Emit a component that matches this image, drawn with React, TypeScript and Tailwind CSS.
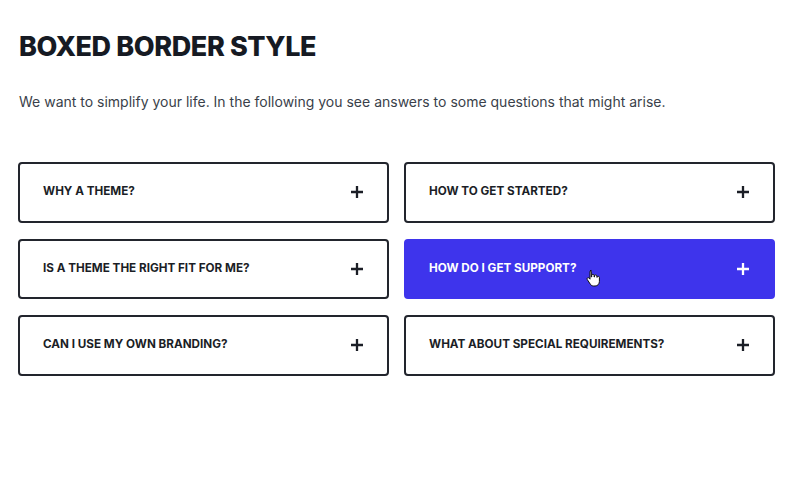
import React, { useState } from 'react';

const questions = [
  'Why a theme?',
  'How to get started?',
  'Is a theme the right fit for me?',
  'How do I get support?',
  'Can I use my own branding?',
  'What about special requirements?',
];

function PlusIcon() {
  return (
    <svg width="14" height="14" viewBox="0 0 14 14" fill="none" stroke="currentColor" strokeWidth="2.3">
      <path d="M7 1v12M1 7h12" />
    </svg>
  );
}

function HandCursor() {
  return (
    <svg className="absolute left-[180px] top-[28px]" width="14" height="18" viewBox="0 0 14 18">
      <path
        d="M4 1.5c.8 0 1.3.5 1.3 1.3V8h.4V6.5c0-.7.5-1.2 1.2-1.2s1.2.5 1.2 1.2V8h.4V7c0-.7.5-1.2 1.2-1.2s1.2.5 1.2 1.2v1.3h.3c0-.6.5-1 1.1-1s1.1.5 1.1 1.1v4c0 2.6-1.8 4.6-4.3 4.6H7.6c-1.4 0-2.4-.6-3.2-1.7L1.3 10.6c-.4-.6-.3-1.3.2-1.7.5-.4 1.2-.3 1.6.2l.9 1.1V2.8c0-.8.5-1.3 1.3-1.3z"
        fill="#fff"
        stroke="#111"
        strokeWidth="1"
        strokeLinejoin="round"
      />
    </svg>
  );
}

export default function App() {
  const [hovered] = useState(3);

  return (
    <div className="w-[800px] h-[480px] bg-white px-[18px] pt-[30px]" style={{ fontFamily: 'Inter, sans-serif' }}>
      <h1 className="text-[27px] leading-[34px] font-extrabold uppercase text-[#161a23] tracking-[-0.4px] pl-[1px]">
        Boxed Border Style
      </h1>
      <p className="mt-[28px] text-[14px] leading-[20px] text-[#3a3f4a] pl-[1px]">
        We want to simplify your life. In the following you see answers to some questions that might arise.
      </p>

      {/* FAQ grid */}
      <div className="mt-[50px] grid grid-cols-2 gap-x-[15px] gap-y-[16px] w-[757px]">
        {questions.map((q, i) => {
          const active = i === hovered;
          return (
            <div
              key={q}
              className={
                active
                  ? 'relative h-[60.5px] rounded-[4px] border-2 border-[#3e34ec] bg-[#3e34ec] text-white flex items-center justify-between pl-[23px] pr-[23px]'
                  : 'relative h-[60.5px] rounded-[4px] border-2 border-[#22252d] bg-white text-[#1b1e26] flex items-center justify-between pl-[23px] pr-[23px]'
              }
            >
              <span className="text-[11.7px] font-bold uppercase">{q}</span>
              <PlusIcon />
              {active && <HandCursor />}
            </div>
          );
        })}
      </div>
    </div>
  );
}
